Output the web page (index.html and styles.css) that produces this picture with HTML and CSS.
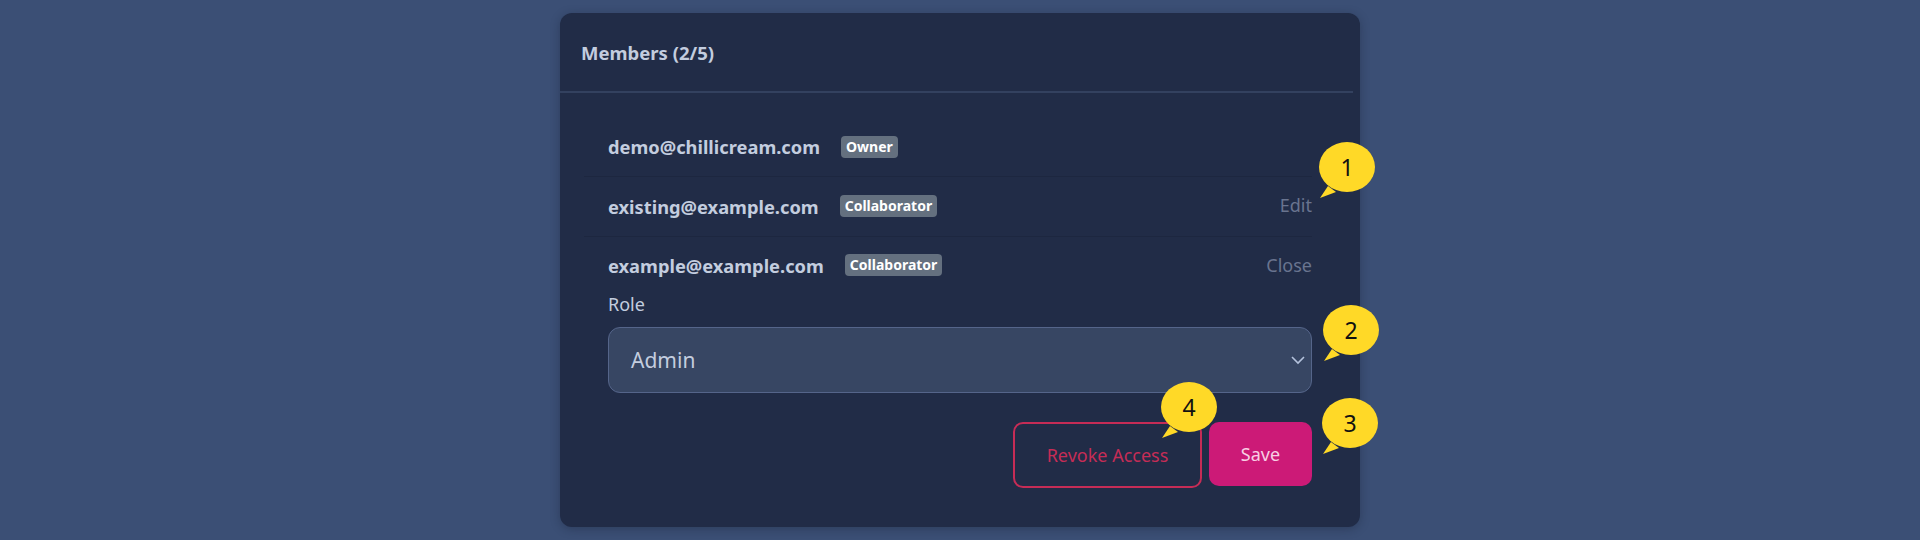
FILE: index.html
```html
<!DOCTYPE html>
<html lang="en">
<head>
    <meta charset="UTF-8">
    <title>Members</title>
    <link rel="stylesheet" href="styles.css">
</head>
<body>
    <main class="card">
        <header class="card-header">Members (2/5)</header>

        <div class="member-list">
            <div class="member-row">
                <span class="email">demo@chillicream.com</span>
                <span class="badge">Owner</span>
            </div>
            <div class="member-row">
                <span class="email">existing@example.com</span>
                <span class="badge">Collaborator</span>
                <a class="row-action" href="#">Edit</a>
            </div>
            <div class="member-row member-open">
                <span class="email">example@example.com</span>
                <span class="badge">Collaborator</span>
                <a class="row-action" href="#">Close</a>
            </div>

            <div class="edit-form">
                <label class="field-label">Role</label>
                <div class="select">
                    <span>Admin</span>
                    <svg class="chevron" width="16" height="10" viewBox="0 0 16 10" fill="none">
                        <path d="M2 2l6 6 6-6" stroke="#b4c2dc" stroke-width="1.6"/>
                    </svg>
                </div>
                <div class="form-actions">
                    <button class="btn btn-revoke">Revoke Access</button>
                    <button class="btn btn-save">Save</button>
                </div>
            </div>
        </div>

        <!-- Numbered callouts -->
        <div class="callout callout-1">
            <svg width="60" height="62" viewBox="0 0 60 62"><ellipse class="bubble" cx="30" cy="25" rx="28" ry="25"/><path class="bubble" d="M3 56l8-12 8 6z"/></svg>
            <span>1</span>
        </div>
        <div class="callout callout-2">
            <svg width="60" height="62" viewBox="0 0 60 62"><ellipse class="bubble" cx="30" cy="25" rx="28" ry="25"/><path class="bubble" d="M3 56l8-12 8 6z"/></svg>
            <span>2</span>
        </div>
        <div class="callout callout-3">
            <svg width="60" height="62" viewBox="0 0 60 62"><ellipse class="bubble" cx="30" cy="25" rx="28" ry="25"/><path class="bubble" d="M3 56l8-12 8 6z"/></svg>
            <span>3</span>
        </div>
        <div class="callout callout-4">
            <svg width="60" height="62" viewBox="0 0 60 62"><ellipse class="bubble" cx="30" cy="25" rx="28" ry="25"/><path class="bubble" d="M3 56l8-12 8 6z"/></svg>
            <span>4</span>
        </div>
    </main>
</body>
</html>
```

FILE: styles.css
```css
:root {
    --page-bg: #3b4f75;
    --card-bg: #212c47;
    --line: #33415f;
    --row-line: #1d2740;
    --text: #c3cddf;
    --muted: #69748f;
    --pink: #cc1a77;
    --red: #c62c56;
    --yellow: #ffd927;
}

html, body {
    height: 100%;
}

body {
    margin: 0;
    background-color: var(--page-bg);
    color: var(--text);
    font-family: "Noto Sans", "Open Sans", sans-serif;
    overflow: hidden;
}

.card {
    position: relative;
    box-sizing: border-box;
    width: 800px;
    height: 514px;
    margin: 13px auto 0;
    background-color: var(--card-bg);
    border-radius: 12px;
    box-shadow: 0 2px 10px rgba(20, 28, 50, 0.35);
}

.card-header {
    box-sizing: border-box;
    height: 80px;
    width: 793px;
    padding: 30px 21px 0;
    font-size: 18.5px;
    line-height: 20px;
    font-weight: 700;
    border-bottom: 2px solid var(--line);
}

.member-list {
    padding: 24.5px 48px 0 24px;
}

.member-row {
    display: flex;
    align-items: center;
    height: 58.5px;
    padding: 0 0 0 24px;
    border-bottom: 1px solid var(--row-line);
}

.member-open {
    height: 53px;
    padding-top: 2px;
    border-bottom: none;
}

.email {
    font-size: 18.3px;
    font-weight: 700;
}

.badge {
    margin-left: 21px;
    padding: 0 5px;
    height: 22px;
    line-height: 21px;
    font-size: 14px;
    font-weight: 700;
    color: #fff;
    background-color: #64707f;
    border-radius: 4px;
}

.row-action {
    margin-left: auto;
    margin-bottom: 2px;
    font-size: 18px;
    color: var(--muted);
    text-decoration: none;
}

.member-open .row-action {
    margin-bottom: 0;
}

.edit-form {
    padding-left: 24px;
}

.field-label {
    display: block;
    font-size: 18px;
    line-height: 24px;
}

.select {
    box-sizing: border-box;
    display: flex;
    align-items: center;
    justify-content: space-between;
    height: 66px;
    margin-top: 11px;
    padding: 0 5px 0 22px;
    font-size: 21px;
    background-color: #374663;
    border: 1px solid #55658a;
    border-radius: 12px;
}

.form-actions {
    display: flex;
    justify-content: flex-end;
    align-items: flex-start;
    gap: 7px;
    margin-top: 29px;
}

.btn {
    box-sizing: border-box;
    font-family: inherit;
    font-size: 18px;
    border-radius: 10px;
}

.btn-revoke {
    width: 189px;
    height: 66px;
    color: var(--red);
    background: none;
    border: 2px solid var(--red);
}

.btn-save {
    width: 103px;
    height: 64px;
    color: #f8cfe4;
    background-color: var(--pink);
    border: none;
}

.callout {
    position: absolute;
    width: 60px;
    height: 62px;
}

.callout svg {
    display: block;
}

.bubble {
    fill: var(--yellow);
}

.callout span {
    position: absolute;
    top: 0;
    left: 2px;
    width: 56px;
    height: 50px;
    line-height: 50px;
    text-align: center;
    font-size: 23px;
    color: #111;
}

.callout-1 {
    left: 757px;
    top: 129px;
}

.callout-2 {
    left: 761px;
    top: 292px;
}

.callout-3 {
    left: 760px;
    top: 385px;
}

.callout-4 {
    left: 599px;
    top: 369px;
}
```
